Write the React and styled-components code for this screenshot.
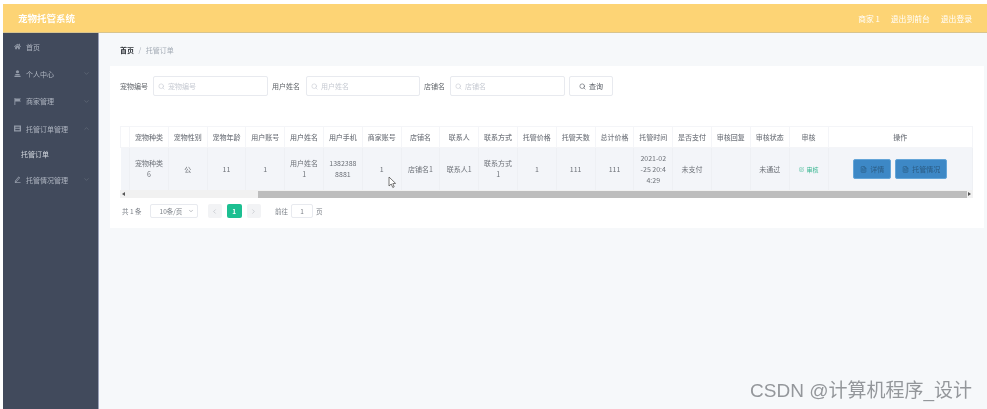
import React from "react";
import styled, { createGlobalStyle } from "styled-components";
import { FaHome } from "react-icons/fa";
import { ChevronDown, ChevronUp, ChevronLeft, ChevronRight, Search, FileText, SquarePen } from "lucide-react";

const GlobalStyle = createGlobalStyle`
  html, body {
    margin: 0;
    padding: 0;
    background: #ffffff;
    overflow: hidden;
  }
  body {
    font-family: "Noto Sans CJK SC", "Liberation Sans", sans-serif;
  }
`;

const Frame = styled.div`
  width: 984px;
  height: 405px;
  margin: 4px 0 0 3px;
  display: flex;
  flex-direction: column;
  position: relative;
  overflow: hidden;
`;

const Header = styled.header`
  height: 28px;
  flex: none;
  background: #fdd475;
  border-bottom: 1px solid #d8c48e;
  display: flex;
  align-items: center;
  justify-content: space-between;
  padding: 0 15px 0 15px;
  color: #ffffff;
  filter: blur(0.4px);
`;

const Brand = styled.div`
  font-size: 9.5px;
  font-weight: 700;
`;

const HeaderLinks = styled.div`
  display: flex;
  gap: 11px;
  font-size: 7.8px;
`;

const Body = styled.div`
  flex: 1;
  display: flex;
  min-height: 0;
`;

const Sidebar = styled.nav`
  width: 95px;
  flex: none;
  background: #414a5c;
  border-right: 1px solid #9aa1b8;
  color: #aeb5c0;
  font-size: 7px;
  filter: blur(0.4px);
`;

const MenuItem = styled.div`
  height: 27.3px;
  display: flex;
  align-items: center;
  gap: 5px;
  padding: 0 8px 0 11px;

  span {
    flex: 1;
  }
`;

const MenuIcon = styled.svg`
  width: 7px;
  height: 7px;
  flex: none;
  fill: #929aa8;
`;

const SubItem = styled.div`
  height: 23px;
  margin-bottom: 1px;
  display: flex;
  align-items: center;
  padding-left: 18px;
  color: #d5d9e0;
`;

const Main = styled.main`
  flex: 1;
  background: #f6f8fa;
  padding: 6px 3px 0 11px;
  min-width: 0;
`;

const Breadcrumb = styled.div`
  height: 21px;
  display: flex;
  align-items: center;
  gap: 4.5px;
  padding-left: 10px;
  font-size: 7px;
  color: #a3abb5;
  filter: blur(0.4px);

  b {
    color: #30343a;
    font-weight: 700;
  }
`;

const Card = styled.section`
  margin-top: 6px;
  height: 162px;
  box-sizing: border-box;
  background: #ffffff;
  padding: 10px 10px 0 10px;
  filter: blur(0.45px);
`;

const Filters = styled.div`
  display: flex;
  align-items: center;
  height: 20px;
  font-size: 7px;
  color: #5f6368;
`;

const FilterLabel = styled.label`
  width: ${(p) => p.$width}px;
  flex: none;
`;

const SearchBox = styled.div`
  width: ${(p) => p.$width || 115}px;
  height: 20px;
  box-sizing: border-box;
  margin-right: 4px;
  border: 1px solid #e8eaef;
  border-radius: 2px;
  display: flex;
  align-items: center;
  gap: 3px;
  padding-left: 4px;
  color: #c6cad2;
`;

const QueryButton = styled.button`
  height: 20px;
  width: 44px;
  padding: 0;
  font: inherit;
  background: #fff;
  color: #555a62;
  border: 1px solid #e8eaef;
  border-radius: 2px;
  display: flex;
  align-items: center;
  justify-content: center;
  gap: 3px;
`;

const TableWrap = styled.div`
  margin-top: 30px;
  width: 853px;
`;

const Table = styled.table`
  width: 853px;
  table-layout: fixed;
  border-collapse: collapse;
  font-size: 7px;
  color: #6d7178;
  text-align: center;
`;

const Col = styled.col`
  width: ${(p) => p.$width}px;
`;

const HeadCell = styled.th`
  height: 20px;
  padding: 0;
  font-weight: 500;
  color: #777b82;
  border: 1px solid #f4f5f8;
`;

const Cell = styled.td`
  height: 42px;
  padding: 0 4px;
  line-height: 11px;
  background: #f3f5f9;
  border-right: 1px solid #eef0f4;
  word-break: break-all;
  white-space: pre-line;
`;

const ScrollBar = styled.div`
  height: 8px;
  background: #f1f1f1;
  display: flex;
  align-items: center;
  justify-content: space-between;
  position: relative;
  padding: 0 2px;
  box-sizing: border-box;
`;

const ScrollThumb = styled.div`
  position: absolute;
  left: 138px;
  right: 6px;
  top: 1px;
  bottom: 0;
  background: #bdbdbd;
`;

const Arrow = styled.i`
  width: 0;
  height: 0;
  border-top: 2px solid transparent;
  border-bottom: 2px solid transparent;
  ${(p) => (p.$right ? "border-left: 3px solid #555;" : "border-right: 3px solid #555;")}
`;

const ActionRow = styled.div`
  display: flex;
  justify-content: center;
  gap: 4px;
`;

const ActionButton = styled.button`
  height: 20px;
  padding: 0 6px;
  background: #3d88c6;
  border: 1px solid #64a5d8;
  border-radius: 2px;
  color: #2b5b82;
  font: inherit;
  display: flex;
  align-items: center;
  gap: 3px;
  white-space: nowrap;
`;

const AuditLink = styled.span`
  display: inline-flex;
  align-items: center;
  gap: 3px;
  color: #35b58f;
  font-size: 6px;
`;

const Pager = styled.div`
  display: flex;
  align-items: center;
  height: 16px;
  margin-top: 5px;
  padding-left: 2px;
  font-size: 6.5px;
  color: #7a7f86;
`;

const PageSize = styled.div`
  width: 48px;
  height: 14px;
  box-sizing: border-box;
  margin-left: 8px;
  margin-right: 10px;
  border: 1px solid #e8eaef;
  border-radius: 2px;
  display: flex;
  align-items: center;
  justify-content: space-between;
  padding: 0 3px 0 9px;
`;

const PageButton = styled.div`
  width: 14.5px;
  height: 14px;
  margin-right: 5px;
  border-radius: 2px;
  display: flex;
  align-items: center;
  justify-content: center;
  background: ${(p) => (p.$active ? "#1cbf91" : "#f2f3f5")};
  color: ${(p) => (p.$active ? "#ffffff" : "#b5b9c0")};
  font-weight: ${(p) => (p.$active ? 700 : 400)};
`;

const JumpLabel = styled.span`
  margin-left: 9px;
`;

const JumpInput = styled.div`
  width: 22px;
  height: 14px;
  box-sizing: border-box;
  margin: 0 3px;
  border: 1px solid #e8eaef;
  border-radius: 2px;
  display: flex;
  align-items: center;
  justify-content: center;
`;

const Cursor = styled.svg`
  position: absolute;
  left: 385px;
  top: 172px;
`;

const Watermark = styled.div`
  position: absolute;
  right: 15px;
  bottom: 8px;
  font-family: "Liberation Sans", "Noto Sans CJK SC", sans-serif;
  font-size: 19px;
  line-height: 20px;
  white-space: nowrap;
  color: #94979b;
  filter: blur(0.25px);
`;

const UserIcon = () => (
  <MenuIcon viewBox="0 0 8 8">
    <circle cx="4" cy="2" r="1.8" />
    <path d="M1.5 4.6h5v1.4h-5zM0.5 6.6h7V8h-7z" />
  </MenuIcon>
);

const FlagIcon = () => (
  <MenuIcon viewBox="0 0 8 8">
    <path d="M0.5 0h1v8h-1zM1.5 0.5H8L6.6 2.2 8 4H1.5z" />
  </MenuIcon>
);

const OrderIcon = () => (
  <MenuIcon viewBox="0 0 8 8">
    <path fillRule="evenodd" d="M0 0.5h8v7H0zM1.5 2v1h5V2zM1.5 4.2v1.8h5V4.2z" />
  </MenuIcon>
);

const NoteIcon = () => (
  <MenuIcon viewBox="0 0 8 8">
    <path d="M1 7.2h6.5V8H1zM1 5.6 5.2 0.6 7 2.1 2.6 7H1zM1.8 5.9v.4h.5L5.8 2.2 5.3 1.8z" fillRule="evenodd" />
  </MenuIcon>
);

const menu = [
  { label: "首页", icon: <FaHome size={7} color="#929aa8" /> },
  { label: "个人中心", icon: <UserIcon />, arrow: "down" },
  { label: "商家管理", icon: <FlagIcon />, arrow: "down" },
  { label: "托管订单管理", icon: <OrderIcon />, arrow: "up" },
  { sub: "托管订单" },
  { label: "托管情况管理", icon: <NoteIcon />, arrow: "down" },
];

const columns = [
  ["宠物种类", "宠物种类6"],
  ["宠物性别", "公"],
  ["宠物年龄", "11"],
  ["用户账号", "1"],
  ["用户姓名", "用户姓名1"],
  ["用户手机", "13823888881"],
  ["商家账号", "1"],
  ["店铺名", "店铺名1"],
  ["联系人", "联系人1"],
  ["联系方式", "联系方式1"],
  ["托管价格", "1"],
  ["托管天数", "111"],
  ["总计价格", "111"],
  ["托管时间", "2021-02\n-25 20:4\n4:29"],
  ["是否支付", "未支付"],
  ["审核回复", ""],
  ["审核状态", "未通过"],
];

const App = () => {
  return (
    <>
      <GlobalStyle />
      <Frame>
        <Header>
          <Brand>宠物托管系统</Brand>
          <HeaderLinks>
            <span>商家 1</span>
            <span>退出到前台</span>
            <span>退出登录</span>
          </HeaderLinks>
        </Header>
        <Body>
          <Sidebar>
            {menu.map((item) =>
              item.sub ? (
                <SubItem key={item.sub}>{item.sub}</SubItem>
              ) : (
                <MenuItem key={item.label}>
                  {item.icon}
                  <span>{item.label}</span>
                  {item.arrow === "down" && <ChevronDown size={7} color="#69717f" />}
                  {item.arrow === "up" && <ChevronUp size={7} color="#69717f" />}
                </MenuItem>
              )
            )}
          </Sidebar>
          <Main>
            <Breadcrumb>
              <b>首页</b>
              <span>/</span>
              <span>托管订单</span>
            </Breadcrumb>
            <Card>
              <Filters>
                <FilterLabel $width={33}>宠物编号</FilterLabel>
                <SearchBox>
                  <Search size={7} />
                  宠物编号
                </SearchBox>
                <FilterLabel $width={34}>用户姓名</FilterLabel>
                <SearchBox $width={114}>
                  <Search size={7} />
                  用户姓名
                </SearchBox>
                <FilterLabel $width={26}>店铺名</FilterLabel>
                <SearchBox>
                  <Search size={7} />
                  店铺名
                </SearchBox>
                <QueryButton>
                  <Search size={7} />
                  查询
                </QueryButton>
              </Filters>
              <TableWrap>
                <Table>
                  <colgroup>
                    <Col $width={9} />
                    {columns.map(([name]) => (
                      <Col key={name} $width={38.8} />
                    ))}
                    <Col $width={39} />
                    <col />
                  </colgroup>
                  <thead>
                    <tr>
                      <HeadCell />
                      {columns.map(([name]) => (
                        <HeadCell key={name}>{name}</HeadCell>
                      ))}
                      <HeadCell>审核</HeadCell>
                      <HeadCell>操作</HeadCell>
                    </tr>
                  </thead>
                  <tbody>
                    <tr>
                      <Cell />
                      {columns.map(([name, value]) => (
                        <Cell key={name}>{value}</Cell>
                      ))}
                      <Cell>
                        <AuditLink>
                          <SquarePen size={5} />
                          审核
                        </AuditLink>
                      </Cell>
                      <Cell>
                        <ActionRow>
                          <ActionButton>
                            <FileText size={7} />
                            详情
                          </ActionButton>
                          <ActionButton>
                            <FileText size={7} />
                            托管情况
                          </ActionButton>
                        </ActionRow>
                      </Cell>
                    </tr>
                  </tbody>
                </Table>
                <ScrollBar>
                  <Arrow />
                  <ScrollThumb />
                  <Arrow $right />
                </ScrollBar>
              </TableWrap>
              <Pager>
                <span>共 1 条</span>
                <PageSize>
                  10条/页
                  <ChevronDown size={6} />
                </PageSize>
                <PageButton>
                  <ChevronLeft size={7} />
                </PageButton>
                <PageButton $active>1</PageButton>
                <PageButton>
                  <ChevronRight size={7} />
                </PageButton>
                <JumpLabel>前往</JumpLabel>
                <JumpInput>1</JumpInput>
                <span>页</span>
              </Pager>
            </Card>
          </Main>
        </Body>
        <Cursor width="9" height="13" viewBox="0 0 9 13">
          <path d="M1 1 L1 10 L3.2 8 L4.8 11.5 L6.2 10.8 L4.8 7.6 L7.6 7.4 Z" fill="#fff" stroke="#555" strokeWidth="0.8" />
        </Cursor>
        <Watermark>CSDN @计算机程序_设计</Watermark>
      </Frame>
    </>
  );
};

export default App;
